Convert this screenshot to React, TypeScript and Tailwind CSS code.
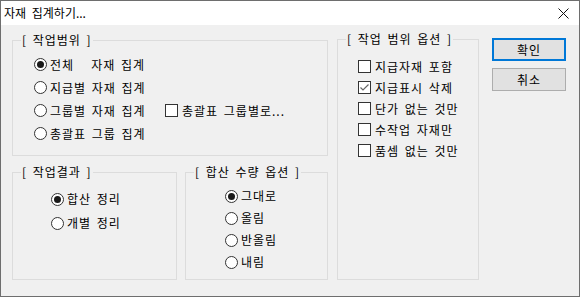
import React from 'react'

const font = { fontFamily: '"Noto Sans CJK KR", "Noto Sans", sans-serif' }

function Radio({ checked, label }: { checked?: boolean; label: string }) {
  return (
    <div className="flex items-center gap-[3px]">
      <div className="w-[13px] h-[13px] rounded-full border border-[#333333] bg-white flex items-center justify-center">
        {checked && <div className="w-[7px] h-[7px] rounded-full bg-[#1a1a1a]" />}
      </div>
      <span className="whitespace-pre tracking-[1px] [word-spacing:2px]">{label}</span>
    </div>
  )
}

function Check({ checked, label }: { checked?: boolean; label: string }) {
  return (
    <div className="flex items-center gap-[4px]">
      <div className="w-[13px] h-[13px] border border-[#333333] bg-white flex items-center justify-center">
        {checked && (
          <svg width="11" height="11" viewBox="0 0 11 11">
            <polyline points="1.5,5.5 4,8 9.5,2.5" fill="none" stroke="#666666" strokeWidth="1.2" />
          </svg>
        )}
      </div>
      <span className="whitespace-pre tracking-[1px] [word-spacing:2px]">{label}</span>
    </div>
  )
}

function Group({ title, className, children }: { title: string; className: string; children: React.ReactNode }) {
  return (
    <div className={`relative border border-[#dcdcdc] ${className}`}>
      <span className="absolute -top-[9px] left-[8px] px-[1px] bg-[#f0f0f0] leading-[16px] whitespace-pre tracking-[1px] [word-spacing:2px]">
        {title}
      </span>
      {children}
    </div>
  )
}

export default function App() {
  return (
    <div className="w-[580px] h-[297px] border border-[#6e6e6e] bg-[#f0f0f0] flex flex-col text-[12px] text-black" style={font}>
      {/* title bar */}
      <div className="h-[24px] bg-white flex items-center justify-between pl-[3px] pr-[10px]">
        <span className="whitespace-pre [word-spacing:3px]">자재 집계하기...</span>
        <svg width="11" height="11" viewBox="0 0 11 11">
          <path d="M0.5 0.5 L10.5 10.5 M10.5 0.5 L0.5 10.5" stroke="#111111" strokeWidth="1" />
        </svg>
      </div>

      <div className="flex pl-[11px] pt-[15px]">
        {/* left column */}
        <div className="w-[316px] flex flex-col gap-[16px]">
          <Group title="[ 작업범위 ]" className="h-[116px] pt-[12px] pl-[21px]">
            <div className="h-[23px] flex items-center">
              <Radio checked label="전체   자재 집계" />
            </div>
            <div className="h-[23px] flex items-center">
              <Radio label="지급별 자재 집계" />
            </div>
            <div className="h-[23px] flex items-center">
              <div className="w-[131px]">
                <Radio label="그룹별 자재 집계" />
              </div>
              <Check label="총괄표 그룹별로..." />
            </div>
            <div className="h-[23px] flex items-center">
              <Radio label="총괄표 그룹 집계" />
            </div>
          </Group>

          <div className="flex gap-[8px]">
            <Group title="[ 작업결과 ]" className="w-[165px] h-[108px] pt-[14px] pl-[38px]">
              <div className="h-[24px] flex items-center">
                <Radio checked label="합산 정리" />
              </div>
              <div className="h-[24px] flex items-center">
                <Radio label="개별 정리" />
              </div>
            </Group>
            <Group title="[ 합산 수량 옵션 ]" className="w-[143px] h-[108px] pt-[12px] pl-[39px]">
              <div className="h-[22px] flex items-center">
                <Radio checked label="그대로" />
              </div>
              <div className="h-[22px] flex items-center">
                <Radio label="올림" />
              </div>
              <div className="h-[22px] flex items-center">
                <Radio label="반올림" />
              </div>
              <div className="h-[22px] flex items-center">
                <Radio label="내림" />
              </div>
            </Group>
          </div>
        </div>

        {/* options */}
        <Group title="[ 작업 범위 옵션 ]" className="ml-[9px] -mt-[1px] w-[142px] h-[241px] pt-[16px] pl-[20px]">
          <div className="h-[21px] flex items-center">
            <Check label="지급자재 포함" />
          </div>
          <div className="h-[21px] flex items-center">
            <Check checked label="지급표시 삭제" />
          </div>
          <div className="h-[21px] flex items-center">
            <Check label="단가 없는 것만" />
          </div>
          <div className="h-[21px] flex items-center">
            <Check label="수작업 자재만" />
          </div>
          <div className="h-[21px] flex items-center">
            <Check label="품셈 없는 것만" />
          </div>
        </Group>

        {/* buttons */}
        <div className="ml-[13px] -mt-[2px] flex flex-col gap-[7px]">
          <button className="w-[74px] h-[23px] bg-[#e1e1e1] border-2 border-[#0078d7] flex items-center justify-center tracking-[1px]">
            확인
          </button>
          <button className="w-[74px] h-[23px] bg-[#e1e1e1] border border-[#adadad] flex items-center justify-center tracking-[1px]">
            취소
          </button>
        </div>
      </div>
    </div>
  )
}
